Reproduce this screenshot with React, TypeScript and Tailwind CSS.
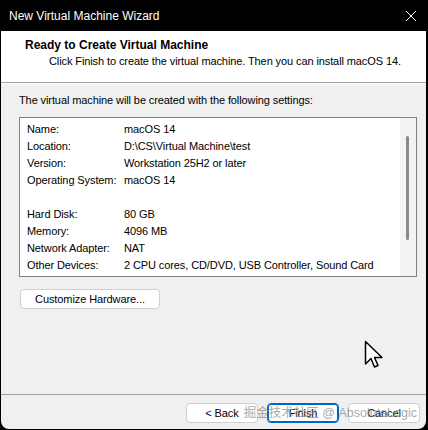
import React from "react";

const rows: [string, string][] = [
  ["Name:", "macOS 14"],
  ["Location:", "D:\\CS\\Virtual Machine\\test"],
  ["Version:", "Workstation 25H2 or later"],
  ["Operating System:", "macOS 14"],
  ["", ""],
  ["Hard Disk:", "80 GB"],
  ["Memory:", "4096 MB"],
  ["Network Adapter:", "NAT"],
  ["Other Devices:", "2 CPU cores, CD/DVD, USB Controller, Sound Card"],
];

function WinButton({ label, focused }: { label: string; focused?: boolean }) {
  return (
    <button
      className={`h-[20px] w-[72px] rounded-[4px] bg-white text-[11px] tracking-[-0.1px] text-black ${
        focused ? "border border-[#0067c0] shadow-[inset_0_0_0_1px_#0067c0]" : "border border-[#d0d0d0]"
      }`}
    >
      {label}
    </button>
  );
}

export default function App() {
  return (
    <div
      className="h-[430px] w-[428px] overflow-hidden whitespace-nowrap bg-black"
      style={{ fontFamily: '"Liberation Sans", "Noto Sans CJK SC", sans-serif' }}
    >
      <div className="relative ml-[1px] flex h-[429px] w-[425px] flex-col overflow-hidden rounded-b-[8px] bg-[#f0f0f0]">
        {/* title bar */}
        <div className="flex h-[31px] items-center justify-between bg-black pl-[8px] pr-[9px] text-[12px] text-white">
          <span>New Virtual Machine Wizard</span>
          <svg width="12" height="12" viewBox="0 0 12 12">
            <path d="M1 1 L11 11 M11 1 L1 11" stroke="#fff" strokeWidth="1" />
          </svg>
        </div>

        {/* header */}
        <div className="flex h-[51px] flex-col bg-white pl-[24px] pt-[6px] text-[11px] leading-[16px] tracking-[-0.1px] text-black">
          <span className="text-[12px] font-bold tracking-normal">Ready to Create Virtual Machine</span>
          <span className="pl-[24px]">Click Finish to create the virtual machine. Then you can install macOS 14.</span>
        </div>
        <div className="h-px bg-[#a0a0a0]" />
        <div className="h-px bg-white" />

        {/* body */}
        <div className="flex flex-1 flex-col pl-[18px] pr-[9px] pt-[8px] text-[11px] leading-[16px] tracking-[-0.1px] text-black">
          <div>The virtual machine will be created with the following settings:</div>

          <div className="mt-[9px] flex h-[160px] border border-[#828282] bg-white">
            <div className="flex-1 pl-[7px] pt-[2px]">
              {rows.map(([k, v], i) => (
                <div key={i} className="flex h-[17px] items-center">
                  <span className="w-[97px]">{k}</span>
                  <span>{v}</span>
                </div>
              ))}
            </div>
            <div className="flex w-[16px] justify-center bg-[#f3f3f3] pr-[1px] pt-[18px]">
              <div className="h-[104px] w-[3px] rounded-full bg-[#8a8a8a]" />
            </div>
          </div>

          <div className="mt-[12px]">
            <button className="ml-[1px] h-[20px] w-[140px] rounded-[4px] border border-[#d0d0d0] bg-white text-[11px] tracking-[-0.1px]">
              Customize Hardware...
            </button>
          </div>

          <div className="relative flex-1">
            <svg
              width="22"
              height="30"
              viewBox="0 0 22 30"
              className="absolute left-[345px] top-[31px]"
            >
              <path
                d="M1.5 1.5 L1.5 24 L7 18.5 L10.5 27 L14 25.5 L10.5 17.5 L18 17.5 Z"
                fill="#fff"
                stroke="#000"
                strokeWidth="1.5"
                strokeLinejoin="round"
              />
            </svg>
          </div>
        </div>

        {/* footer */}
        <div className="h-px bg-[#a0a0a0]" />
        <div className="relative flex h-[34px] items-start justify-end gap-[9px] pr-[6px] pt-[8px]">
          <WinButton label="< Back" />
          <WinButton label="Finish" focused />
          <WinButton label="Cancel" />
          <span className="pointer-events-none absolute right-[9px] top-[10px] text-[12.5px] leading-[16px] text-[#8f8f8f] opacity-75">
            掘金技术社区 @ AbsoluteLogic
          </span>
        </div>
      </div>
    </div>
  );
}
